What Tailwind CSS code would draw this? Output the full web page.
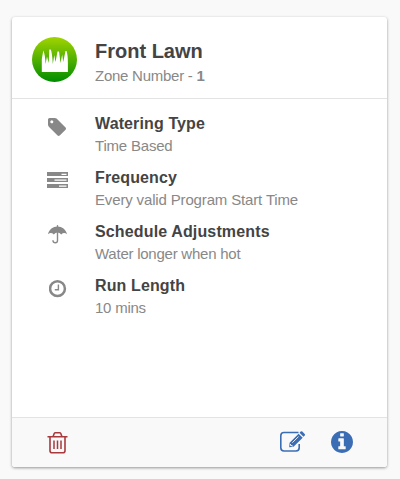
<!doctype html>
<html lang="en">

<head>
  <meta charset="UTF-8">
  <meta name="viewport" content="width=device-width, initial-scale=1.0">
  <title>Front Lawn</title>
  <script src="https://cdn.jsdelivr.net/npm/@tailwindcss/browser@4"></script>
</head>

<body class="min-h-screen bg-[#f9f9f9] px-3 pt-[17px] font-['Liberation_Sans',Arial,sans-serif] text-[15px] text-[#888]">

  <div class="flex h-[450px] w-[375px] flex-col rounded-[3px] bg-white shadow-[0_1px_3px_rgba(0,0,0,0.4)]">

    <!-- Zone header -->
    <header class="flex h-[82px] shrink-0 border-b border-[#e3e3e3] pl-5 pt-5">
      <svg class="h-[45px] w-[45px]" viewBox="0 0 45 45" aria-hidden="true">
        <defs>
          <linearGradient id="lawn" x1="0" y1="0" x2="0" y2="1">
            <stop offset="0" stop-color="#a2d400" />
            <stop offset="1" stop-color="#008c00" />
          </linearGradient>
        </defs>
        <circle cx="22.5" cy="22.5" r="22.5" fill="url(#lawn)" />
        <path fill="#fff" d="M9.800 35V22L11.300 13.500Q13.300 18 13.500 27L15 19.500L16.700 26L17.300 12.500H18.800Q20.300 17 20.800 27L22.300 18L23.500 25L25.500 14.500H27L28.500 26L30.200 17.500L31.200 25L33.500 14H34.500Q35.900 18 35.900 26V35Z" />
      </svg>
      <div class="ml-[18px] pt-0.5">
        <h1 class="text-xl leading-6 font-bold text-[#444]">Front Lawn</h1>
        <p class="mt-0.5 leading-[22px] tracking-[-0.25px]">Zone Number - <b>1</b></p>
      </div>
    </header>

    <!-- Zone settings -->
    <ul class="flex grow flex-col gap-2.5 pt-[13px]">
      <li class="flex h-11">
        <svg class="mt-1.5 ml-9 h-[18px] w-[18px]" viewBox="128 128 1515 1515" fill="currentColor" aria-hidden="true">
          <path d="M576 448q0-53-37.500-90.500t-90.500-37.500-90.500 37.500-37.500 90.500 37.500 90.500 90.500 37.500 90.500-37.500 37.500-90.500zm1067 576q0 53-37 90l-491 492q-39 37-91 37-53 0-90-37l-715-716q-38-37-64.500-101t-26.500-117v-416q0-52 38-90t90-38h416q53 0 117 26.500t102 64.500l715 714q37 39 37 91z" />
        </svg>
        <div class="ml-[29px]">
          <h2 class="text-base leading-6 font-bold tracking-[0.12px] text-[#444]">Watering Type</h2>
          <p class="leading-5 tracking-[-0.2px]">Time Based</p>
        </div>
      </li>
      <li class="flex h-11">
        <svg class="mt-1.5 ml-[35px] h-4 w-[21px]" viewBox="0 0 21 16" aria-hidden="true">
          <path fill="currentColor" d="M0 0h21v4H0zM0 6h21v4H0zM0 12h21v4H0z" />
          <path stroke="#fff" stroke-width="1.300" d="M14.500 2.300h5M7.500 8.200h12M12 14.100h7.500" />
        </svg>
        <div class="ml-[27px]">
          <h2 class="text-base leading-6 font-bold tracking-[0.12px] text-[#444]">Frequency</h2>
          <p class="leading-5 tracking-[-0.15px]">Every valid Program Start Time</p>
        </div>
      </li>
      <li class="flex h-11">
        <svg class="mt-[5px] ml-9 h-[19px] w-5" viewBox="0 0 20 19" aria-hidden="true">
          <path fill="currentColor" d="M9.500 1.500C14 1.500 18 4.500 19 9.300Q16 6.800 13.200 9.600Q11.500 7.500 9.500 7.500T5.800 9.600Q3 6.800 0 9.300C1 4.500 5 1.500 9.500 1.500Z" />
          <path fill="none" stroke="currentColor" stroke-width="1.400" stroke-linecap="round" d="M9.500 .8V15.500Q9.500 17.800 7.300 17.800T5 15.800" />
        </svg>
        <div class="ml-[27px]">
          <h2 class="text-base leading-6 font-bold tracking-[0.14px] text-[#444]">Schedule Adjustments</h2>
          <p class="leading-5 tracking-[-0.24px]">Water longer when hot</p>
        </div>
      </li>
      <li class="flex h-11">
        <svg class="mt-1.5 ml-[37px] h-[18px] w-[18px]" viewBox="0 0 18 18" fill="none" stroke="currentColor" aria-hidden="true">
          <circle cx="8.500" cy="8.700" r="7.400" stroke-width="2.500" />
          <path stroke-width="1.400" d="M9.400 4.500v5.200H5.800" />
        </svg>
        <div class="ml-7">
          <h2 class="text-base leading-6 font-bold tracking-[0.12px] text-[#444]">Run Length</h2>
          <p class="leading-5 tracking-[-0.24px]">10 mins</p>
        </div>
      </li>
    </ul>

    <!-- Actions -->
    <footer class="flex h-[50px] shrink-0 items-start rounded-b-[3px] border-t border-[#e3e3e3] bg-[#f9f9f9] pt-[13px] pl-[35px]">
      <button class="mt-px text-[#a83a3e]" aria-label="Delete">
        <svg class="h-[22px] w-[21px]" viewBox="0 0 21 22" fill="none" stroke="currentColor">
          <path stroke-width="1.600" d="M.5 4.800h20M6 4.800L7.300 1.300Q7.600 .8 8.300 .8h4.400q.7 0 1 .5L15 4.800M3 4.800v14q0 2 2 2h11q2 0 2-2v-14" />
          <path stroke-width="1.500" d="M7 8.500v8.500M10.500 8.500v8.500M14 8.500v8.500" />
        </svg>
      </button>
      <button class="ml-[212px] text-[#3b6db5]" aria-label="Edit">
        <svg class="h-[22px] w-[26px]" viewBox="0 0 26 22" fill="none" stroke="currentColor">
          <path stroke-width="1.600" d="M18.500 1.500H4Q.8 1.500 .8 4.700V16.800Q.8 20 4 20H16Q19.200 20 19.200 16.800V13" />
          <path fill="currentColor" stroke="none" d="M18.600 2.700L22.700 6.800L13.500 15.700L9.200 16.300L9.600 11.700ZM19.500 1.800L20.700 .6Q21.500 -.1 22.300 .6L24.700 3Q25.500 3.800 24.700 4.600L23.500 5.800Z" />
          <path stroke="#f9f9f9" stroke-width=".9" d="M12.300 11.700L18.500 5.600M10.500 13v1.500h1.700v1.200" />
        </svg>
      </button>
      <button class="ml-[25px] text-[#3b6db5]" aria-label="Info">
        <svg class="h-[22px] w-[22px]" viewBox="128 128 1536 1536" fill="currentColor">
          <path d="M1152 1376v-160q0-14-9-23t-23-9h-96v-512q0-14-9-23t-23-9h-320q-14 0-23 9t-9 23v160q0 14 9 23t23 9h96v320h-96q-14 0-23 9t-9 23v160q0 14 9 23t23 9h448q14 0 23-9t9-23zm-128-896v-160q0-14-9-23t-23-9h-192q-14 0-23 9t-9 23v160q0 14 9 23t23 9h192q14 0 23-9t9-23zm640 416q0 209-103 385.500t-279.500 279.500-385.500 103-385.500-103-279.500-279.500-103-385.500 103-385.500 279.500-279.500 385.500-103 385.500 103 279.500 279.500 103 385.500z" />
        </svg>
      </button>
    </footer>

  </div>

</body>

</html>
